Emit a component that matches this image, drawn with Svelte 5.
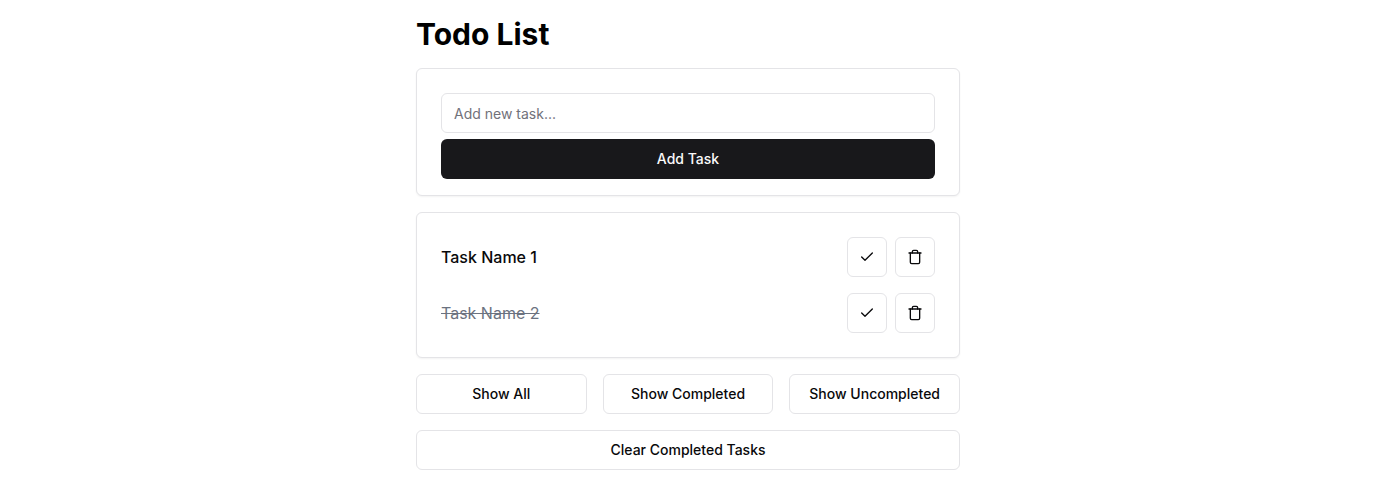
<script>
  const tasks = [
    { name: 'Task Name 1', done: false },
    { name: 'Task Name 2', done: true }
  ];
  const filters = ['Show All', 'Show Completed', 'Show Uncompleted'];
</script>

<main>
  <h1>Todo List</h1>
  <section class="card form">
    <input placeholder="Add new task..." aria-label="New task" />
    <button class="primary">Add Task</button>
  </section>
  <section class="card list">
    {#each tasks as task}
      <div class="row">
        <span class="name" class:done={task.done}>{task.name}</span>
        <div class="actions">
          <button class="icon" aria-label="Complete">
            <svg viewBox="0 0 24 24"><polyline points="20 6 9 17 4 12" /></svg>
          </button>
          <button class="icon" aria-label="Delete">
            <svg viewBox="0 0 24 24">
              <path d="M3 6h18" />
              <path d="M19 6v14c0 1-1 2-2 2H7c-1 0-2-1-2-2V6" />
              <path d="M8 6V4c0-1 1-2 2-2h4c1 0 2 1 2 2v2" />
            </svg>
          </button>
        </div>
      </div>
    {/each}
  </section>
  <div class="filters">
    {#each filters as label}
      <button>{label}</button>
    {/each}
  </div>
  <button class="clear">Clear Completed Tasks</button>
</main>

<style>
  :global(body) {
    background: #fff;
  }
  main, main * {
    box-sizing: border-box;
  }
  main {
    width: 576px;
    margin: 0 auto;
    padding: 16px;
    font-family: Inter, sans-serif;
    color: #09090b;
  }
  h1 {
    margin: 0 0 16px;
    font-size: 30px;
    line-height: 36px;
    font-weight: 700;
    color: #000;
  }
  .card {
    border: 1px solid #e4e4e7;
    border-radius: 6px;
    background: #fff;
    box-shadow: 0 1px 2px rgba(0, 0, 0, 0.05);
    margin-bottom: 16px;
  }
  .form {
    display: flex;
    flex-direction: column;
    gap: 6px;
    padding: 24px 24px 16px;
  }
  input {
    width: 100%;
    height: 40px;
    padding: 8px 12px;
    border: 1px solid #e4e4e7;
    border-radius: 6px;
    font: 400 14px/20px Inter, sans-serif;
    background: #fff;
  }
  input::placeholder {
    color: #71717a;
  }
  button {
    display: flex;
    align-items: center;
    justify-content: center;
    height: 40px;
    padding: 0 16px;
    border: 1px solid #e4e4e7;
    border-radius: 6px;
    background: #fff;
    color: #09090b;
    font: 500 14px/20px Inter, sans-serif;
    white-space: nowrap;
  }
  .primary {
    border: 0;
    background: #18181b;
    color: #fafafa;
  }
  .list {
    display: flex;
    flex-direction: column;
    gap: 16px;
    padding: 24px;
  }
  .row {
    display: flex;
    align-items: center;
    justify-content: space-between;
  }
  .name {
    font-size: 16px;
    line-height: 24px;
    font-weight: 500;
  }
  .done {
    font-weight: 400;
    color: #6b7280;
    text-decoration: line-through;
  }
  .actions {
    display: flex;
    gap: 8px;
  }
  .icon {
    width: 40px;
    padding: 0;
  }
  svg {
    width: 16px;
    height: 16px;
    fill: none;
    stroke: currentColor;
    stroke-width: 2;
    stroke-linecap: round;
    stroke-linejoin: round;
  }
  .filters {
    display: grid;
    grid-template-columns: repeat(3, minmax(0, 1fr));
    gap: 16px;
    margin-bottom: 16px;
  }
  .clear {
    width: 100%;
  }
</style>
